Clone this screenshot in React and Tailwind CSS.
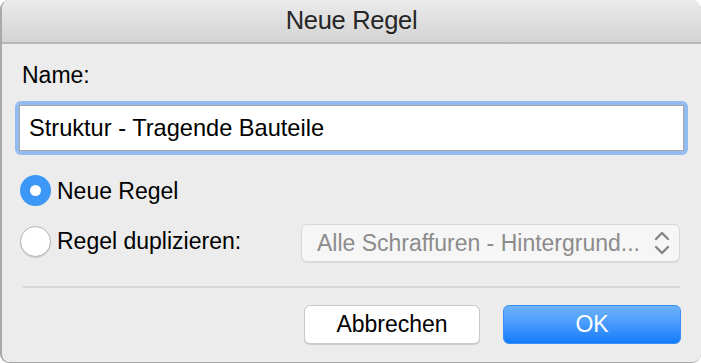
import React, { useState } from "react";

export default function App() {
  const [name, setName] = useState("Struktur - Tragende Bauteile");
  const [mode, setMode] = useState("new");

  return (
    <div className="w-[701px] h-[363px] bg-white font-['Liberation_Sans',Arial,sans-serif]">
      <div className="w-full h-full flex flex-col bg-[#ececec] rounded-[9px] border-l-2 border-b border-[#a9a9a9] overflow-hidden">
        {/* title bar */}
        <div className="h-[44px] shrink-0 flex items-center justify-center bg-gradient-to-b from-[#ebebeb] to-[#d3d3d3] border-b-2 border-[#b6b6b6]">
          <span className="text-[25.5px] text-[#262626] leading-none tracking-[-0.3px]">
            Neue Regel
          </span>
        </div>

        <div className="flex flex-col px-[13px]">
          <label className="mt-[17px] ml-[7px] text-[23px] leading-[28px] text-black">
            Name:
          </label>

          {/* focused text field */}
          <div className="mt-[12px] rounded-[6px] bg-[#92bbf0] p-[4px]">
            <input
              value={name}
              onChange={(e) => setName(e.target.value)}
              className="w-full h-[46px] bg-white border border-[#a7a7a7] px-[9px] text-[23.6px] text-black outline-none"
            />
          </div>

          {/* radios */}
          <button
            onClick={() => setMode("new")}
            className="mt-[20px] ml-[5px] flex items-center gap-[6px] text-left"
          >
            <span
              className={
                mode === "new"
                  ? "w-[31px] h-[31px] rounded-full bg-[#3d97f7] flex items-center justify-center"
                  : "w-[31px] h-[31px] rounded-full bg-white border border-[#b4b4b4] shadow-[0_1px_1px_rgba(0,0,0,0.12)]"
              }
            >
              {mode === "new" && (
                <span className="w-[11px] h-[11px] rounded-full bg-white" />
              )}
            </span>
            <span className="text-[23px] leading-[28px] text-black">Neue Regel</span>
          </button>

          <div className="mt-[14px] flex items-center">
            <button
              onClick={() => setMode("dup")}
              className="ml-[5px] flex items-center gap-[6px] text-left"
            >
              <span
                className={
                  mode === "dup"
                    ? "w-[31px] h-[31px] rounded-full bg-[#3d97f7] flex items-center justify-center"
                    : "w-[31px] h-[31px] rounded-full bg-white border border-[#b4b4b4] shadow-[0_1px_1px_rgba(0,0,0,0.12)]"
                }
              >
                {mode === "dup" && (
                  <span className="w-[11px] h-[11px] rounded-full bg-white" />
                )}
              </span>
              <span className="text-[23px] leading-[28px] text-black">
                Regel duplizieren:
              </span>
            </button>

            <div className="ml-auto mr-[8px] mt-[4px] w-[379px] h-[38px] flex items-center rounded-[6px] bg-[#f6f6f6] border border-[#d8d8d8] shadow-[0_1px_1px_rgba(0,0,0,0.08)] pl-[15px] pr-[9px]">
              <span className="flex-1 text-[23px] text-[#8c8c8c] truncate">
                Alle Schraffuren - Hintergrund...
              </span>
              <svg width="16" height="26" viewBox="0 0 16 26" fill="none" stroke="#858585" strokeWidth="2.4" strokeLinecap="round" strokeLinejoin="round">
                <path d="M2 9 L8 3 L14 9" />
                <path d="M2 17 L8 23 L14 17" />
              </svg>
            </div>
          </div>

          <div className="mt-[24px] mx-[8px] h-[2px] bg-[#d6d6d6]" />

          <div className="mt-[17px] mr-[7px] flex justify-end gap-[23px]">
            <button className="w-[176px] h-[39px] rounded-[6px] bg-white border border-[#c9c9c9] shadow-[0_1px_1px_rgba(0,0,0,0.15)] text-[23px] text-black">
              Abbrechen
            </button>
            <button className="w-[178px] h-[39px] rounded-[6px] bg-gradient-to-b from-[#6db3fa] to-[#0f7cfb] border border-[#3b8ef2] text-[23px] text-white">
              OK
            </button>
          </div>
        </div>
      </div>
    </div>
  );
}
